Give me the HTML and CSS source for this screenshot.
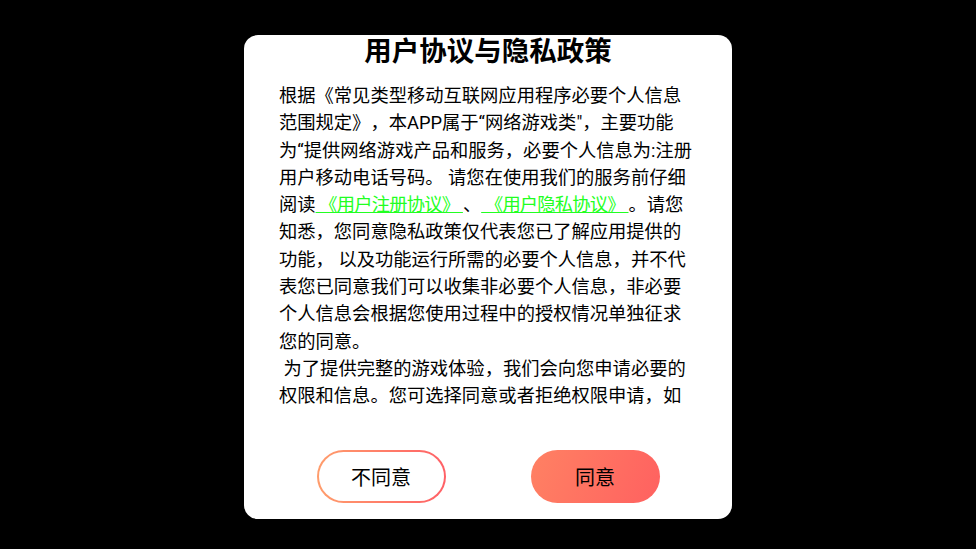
FILE: index.html
```html
<!DOCTYPE html>
<html lang="zh-CN">
<head>
<meta charset="utf-8">
<link rel="stylesheet" href="styles.css">
</head>
<body>
<div class="stage">
  <div class="dialog">
    <h1 class="title">用户协议与隐私政策</h1>
    <div class="content">
      <p class="text">根据《常见类型移动互联网应用程序必要个人信息<br>范围规定》，本APP属于“网络游戏类"，主要功能<br>为“提供网络游戏产品和服务，必要个人信息为:注册<br>用户移动电话号码。 请您在使用我们的服务前仔细<br>阅读<a class="link"> 《用户注册协议》 </a>、<a class="link"> 《用户隐私协议》 </a>。请您<br>知悉，您同意隐私政策仅代表您已了解应用提供的<br>功能， 以及功能运行所需的必要个人信息，并不代<br>表您已同意我们可以收集非必要个人信息，非必要<br>个人信息会根据您使用过程中的授权情况单独征求<br>您的同意。</p>
      <p class="text">&nbsp;为了提供完整的游戏体验，我们会向您申请必要的<br>权限和信息。您可选择同意或者拒绝权限申请，如<br>果拒绝可能会导致部分游戏体验异常。</p>
    </div>
    <div class="actions">
      <button class="btn btn-outline">不同意</button>
      <button class="btn btn-fill">同意</button>
    </div>
  </div>
</div>
</body>
</html>
```
FILE: styles.css
```css
html, body {
  margin: 0;
  padding: 0;
  background: #000;
  height: 100%;
}
.stage {
  height: 549px;
  display: flex;
  justify-content: center;
  align-items: flex-start;
  padding-top: 35px;
  box-sizing: border-box;
}
.dialog {
  width: 488px;
  height: 484px;
  background: #fff;
  border-radius: 14px;
  display: flex;
  flex-direction: column;
  overflow: hidden;
  font-family: Roboto, "Noto Sans CJK SC", sans-serif;
}
.title {
  margin: 0;
  height: 28px;
  flex: none;
  line-height: 28px;
  font-family: "Noto Sans CJK SC", sans-serif;
  font-size: 27.5px;
  font-weight: 700;
  color: #000;
  text-align: center;
}
.content {
  height: 347px;
  flex: none;
  overflow: hidden;
  padding: 19px 20px 0 35px;
  box-sizing: border-box;
}
.text {
  margin: 0;
  white-space: nowrap;
  font-size: 18.3px;
  line-height: 27.3px;
  color: #000;
  text-spacing-trim: space-all;
}
.link {
  color: #22ff22;
  text-decoration: underline;
  letter-spacing: -0.8px;
}
.actions {
  flex: 1;
  display: flex;
  justify-content: center;
  gap: 85px;
  padding-top: 40px;
  box-sizing: border-box;
}
.btn {
  width: 129px;
  height: 53px;
  border-radius: 27px;
  font-family: "Noto Sans CJK SC", sans-serif;
  font-size: 20px;
  color: #000;
  cursor: pointer;
}
.btn-outline {
  border: 2px solid transparent;
  background: linear-gradient(#fff, #fff) padding-box,
              linear-gradient(90deg, #ff9d6c, #ff6066) border-box;
}
.btn-fill {
  border: none;
  background: linear-gradient(110deg, #ff8163, #ff6160);
}
```
